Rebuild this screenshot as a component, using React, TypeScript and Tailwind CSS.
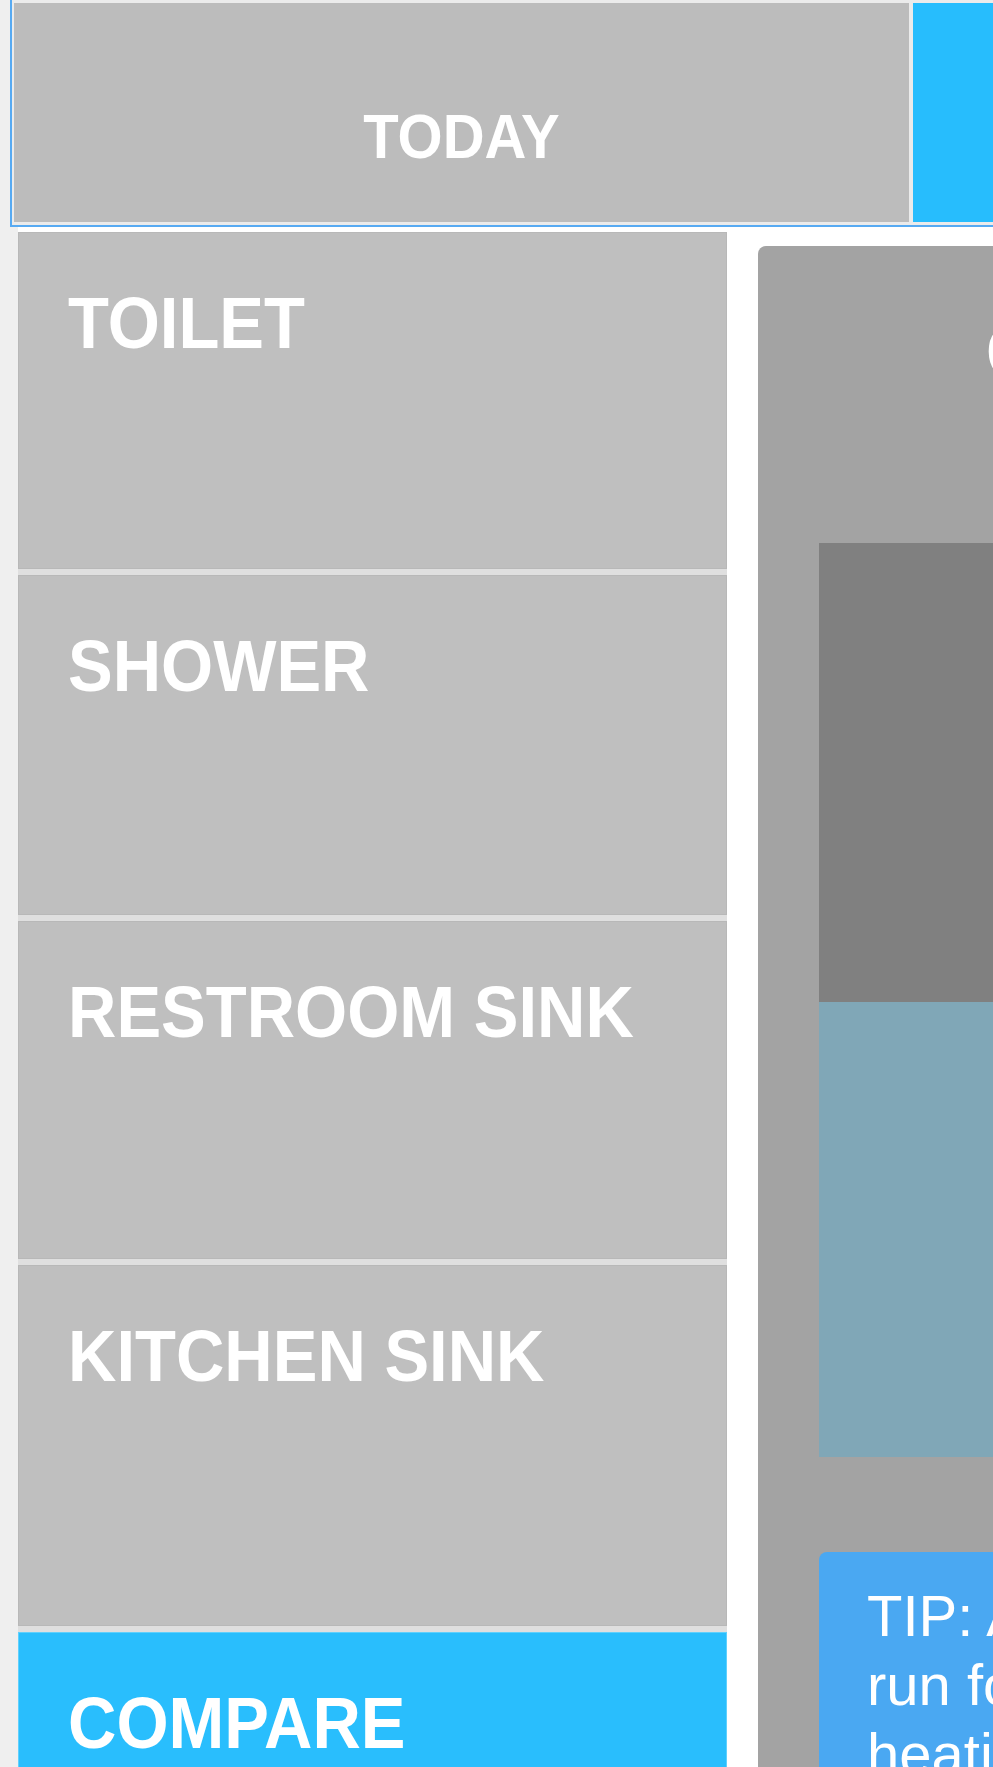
const fixtures = [
  { name: "TOILET", h: "h-[337px]", active: false },
  { name: "SHOWER", h: "h-[340px]", active: false },
  { name: "RESTROOM SINK", h: "h-[338px]", active: false },
  { name: "KITCHEN SINK", h: "h-[361px]", active: false },
  { name: "COMPARE", h: "h-[340px]", active: true },
];

function SideTile({ name, h, active }: { name: string; h: string; active: boolean }) {
  return (
    <div
      className={`${h} border pl-[49px] pt-[53px] ${
        active ? "border-[#5fd0fd] bg-[#29befd]" : "border-[#b8b8b8] bg-[#bfbfbf]"
      }`}
    >
      <div className="origin-top-left scale-y-[1.08] whitespace-nowrap text-[67px] font-bold leading-none text-white">
        {name}
      </div>
    </div>
  );
}

export default function App() {
  return (
    <div
      className="h-[1767px] w-full overflow-hidden bg-[#efefef]"
      style={{ fontFamily: '"Liberation Sans", Arial, sans-serif' }}
    >
      <div className="w-[1900px]">
        {/* period tabs */}
        <div className="ml-[10px] flex gap-[4px] border-b-2 border-l-2 border-[#57aaf2] bg-[#ebebeb] pb-[3px] pl-[2px] pt-[3px]">
          <div className="h-[219px] w-[895px] bg-[#bcbcbc] pt-[102px] text-center">
            <div className="origin-top scale-y-[1.08] text-[58px] font-bold leading-none text-white">TODAY</div>
          </div>
          <div className="h-[219px] w-[900px] bg-[#27bdfd]" />
        </div>

        <div className="ml-[18px] flex items-start bg-white">
          <div className="mt-[5px] flex w-[709px] flex-col gap-[6px] bg-[#dfdfdf]">
            {fixtures.map((f) => (
              <SideTile key={f.name} {...f} />
            ))}
          </div>

          <div className="ml-[31px] mt-[19px] h-[1600px] w-[1100px] rounded-tl-[8px] bg-[#a3a3a3]">
            <div className="pl-[228px] pt-[69px]">
              <div className="origin-top-left scale-y-[1.08] whitespace-nowrap text-[67px] font-bold leading-none text-white">
                COMPARE USAGE
              </div>
            </div>

            <div className="mt-[161px] pl-[61px]">
              <div className="w-[900px]">
                <div className="h-[459px] bg-[#808080]" />
                <div className="h-[455px] bg-[#80a7b7]" />
              </div>

              <div className="mt-[95px] w-[900px] rounded-[8px] bg-[#4aa8f2] pb-[40px] pl-[48px] pt-[29px] text-[58px] leading-[69px] text-white">
                TIP: A running tap
                <br />
                run for one minute while
                <br />
                heating wastes water.
              </div>
            </div>
          </div>
        </div>
      </div>
    </div>
  );
}
